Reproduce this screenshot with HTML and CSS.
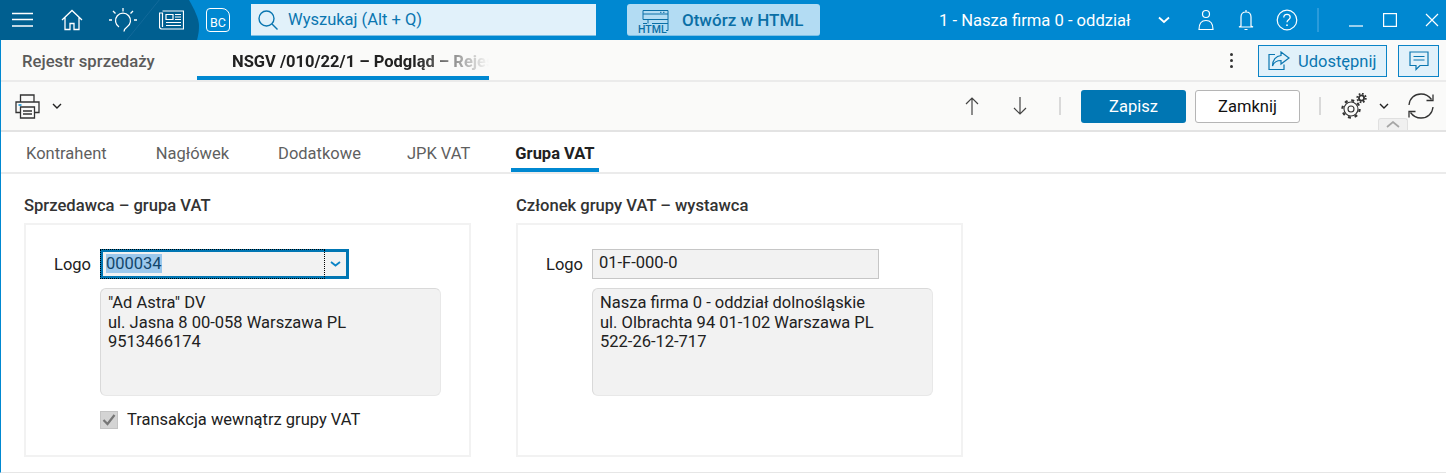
FILE: index.html
```html
<!DOCTYPE html>
<html lang="en">
<head>
    <meta charset="UTF-8">
    <meta name="viewport" content="width=device-width, initial-scale=1.0">
    <title>Grupa VAT</title>
    <link rel="stylesheet" href="styles.css">
</head>
<body>
    <div class="window">
        <header class="topbar">
            <nav class="nav-dark">
                <svg class="ico-menu" width="22" height="16" viewBox="0 0 22 16"><path d="M0 1.500h21M0 7.500h21M0 14h21" stroke="#fff" stroke-width="1.400" fill="none"/></svg>
                <svg class="ico-home" width="22" height="22" viewBox="0 0 22 22"><path d="M1 11 11 1.500 21 11M4 8.500V20.500h5v-6h4v6h5V8.500" stroke="#fff" stroke-width="1.300" fill="none"/></svg>
                <svg class="ico-bulb" width="28" height="26" viewBox="0 0 28 26"><path d="M10 20a7.500 7.500 0 1 1 8 0c-1.500 1-3 2-3 4.500M14 1v3.500M4 4l2.500 2.500M24 4l-2.500 2.500M0 13h3M25 13h3" stroke="#fff" stroke-width="1.300" fill="none"/></svg>
                <svg class="ico-news" width="25" height="20" viewBox="0 0 25 20"><path d="M3.500 1h21v18H3c-1.500 0-2.500-1-2.500-2.500V3h3v14M7 4.500h7v5H7zM16 4.500h6M16 7h6M16 9.500h6M7 12.500h15M7 15.500h15" stroke="#fff" stroke-width="1.200" fill="none"/></svg>
            </nav>
            <div class="bc-logo">BC</div>
            <div class="search">
                <svg width="20" height="20" viewBox="0 0 20 20"><circle cx="8.500" cy="8.500" r="7.500" stroke="#0a76b0" stroke-width="1.400" fill="none"/><path d="m14 14 5.500 5.500" stroke="#0a76b0" stroke-width="1.400"/></svg>
                <span>Wyszukaj (Alt + Q)</span>
            </div>
            <button class="html-btn" type="button">
                <svg width="32" height="30" viewBox="0 -4.500 32 30"><path d="M5 10V1h25v20h-2M5 4.500h25M5 10h25M10 10v4M14 14h16M9 14H5" stroke="#0a6fa6" stroke-width="1" fill="none"/><path d="M22 2.800h1.500M25 2.800h1.500" stroke="#0a6fa6"/><text x="0" y="23" class="html-mini">HTML</text></svg>
                <span>Otwórz w HTML</span>
            </button>
            <div class="company">1 - Nasza firma 0 - oddział</div>
            <svg class="ico-chev-top" width="12" height="8" viewBox="0 0 12 8"><path d="m1 1.500 5 4.500 5-4.500" stroke="#fff" stroke-width="1.800" fill="none"/></svg>
            <svg class="ico-user" width="16" height="22" viewBox="0 0 16 22"><circle cx="8" cy="5" r="3.500" stroke="#fff" stroke-width="1.200" fill="none"/><path d="M1 20.500c0-6 2.500-9 7-9s7 3 7 9z" stroke="#fff" stroke-width="1.200" fill="none"/></svg>
            <svg class="ico-bell" width="16" height="22" viewBox="0 0 16 22"><path d="M8 1v2M3 17V8c0-3 2-5 5-5s5 2 5 5v9l2 1H1zM6.500 20.500h3" stroke="#fff" stroke-width="1.200" fill="none"/></svg>
            <svg class="ico-help" width="22" height="22" viewBox="0 0 22 22"><circle cx="11" cy="11" r="9.800" stroke="#fff" stroke-width="1.200" fill="none"/><path d="M7.800 8.500c0-2 1.400-3.200 3.200-3.200s3.200 1.200 3.200 3c0 2.500-3.200 2.500-3.200 5" stroke="#fff" stroke-width="1.300" fill="none"/><circle cx="11" cy="16.200" r=".9" fill="#fff"/></svg>
            <div class="top-sep"></div>
            <svg class="ico-min" width="14" height="14" viewBox="0 0 14 14"><path d="M0 13h14" stroke="#fff" stroke-width="1.200"/></svg>
            <svg class="ico-max" width="14" height="14" viewBox="0 0 14 14"><rect x=".6" y=".6" width="12.800" height="12.800" stroke="#fff" stroke-width="1.200" fill="none"/></svg>
            <svg class="ico-close" width="14" height="14" viewBox="0 0 14 14"><path d="m1 1 12 12M13 1 1 13" stroke="#fff" stroke-width="1.200"/></svg>
        </header>

        <div class="pagebar">
            <div class="page-tab">Rejestr sprzedaży</div>
            <div class="page-tab page-tab-active"><span>NSGV /010/22/1 – Podgląd – Rejes</span></div>
            <div class="dots"><i></i><i></i><i></i></div>
            <button class="share-btn" type="button">
                <svg width="22" height="20" viewBox="0 0 22 20"><path d="M7 3.500H1v15h15v-5" stroke="#0a76b0" stroke-width="1.200" fill="none"/><path d="M13 1l8 6-8 6V9.500C9 9.500 6 11 4.500 15 4.500 9 8 5 13 4.500z" stroke="#0a76b0" stroke-width="1.200" fill="none"/></svg>
                <span>Udostępnij</span>
            </button>
            <button class="chat-btn" type="button">
                <svg width="20" height="20" viewBox="0 0 20 20"><path d="M1 1h18v13.500h-8l-4 4v-4H1zM4.500 5.500h11M4.500 9h11" stroke="#0a76b0" stroke-width="1.200" fill="none"/></svg>
            </button>
        </div>

        <div class="toolbar">
            <svg class="ico-print" width="25" height="25" viewBox="0 0 25 25"><path d="M5.500 8V1h13.500v7" stroke="#333" stroke-width="1.300" fill="none"/><path d="M5 18.500H1V8h23v10.500h-4" stroke="#333" stroke-width="1.300" fill="none"/><path d="M5.500 13h14v11h-14zM8 17h9M8 20h9" stroke="#333" stroke-width="1.300" fill="none"/><path d="M3.500 11h3" stroke="#0088d1" stroke-width="1.500"/></svg>
            <svg class="ico-chev" width="10" height="7" viewBox="0 0 10 7"><path d="m1 1 4 4 4-4" stroke="#222" stroke-width="1.400" fill="none"/></svg>
            <svg class="ico-up" width="14" height="18" viewBox="0 0 14 18"><path d="M7 18V1M1 7l6-6 6 6" stroke="#444" stroke-width="1.200" fill="none"/></svg>
            <svg class="ico-down" width="14" height="18" viewBox="0 0 14 18"><path d="M7 0v17M1 11l6 6 6-6" stroke="#444" stroke-width="1.200" fill="none"/></svg>
            <div class="tool-sep sep-a"></div>
            <button class="btn-primary" type="button">Zapisz</button>
            <button class="btn-plain" type="button">Zamknij</button>
            <div class="tool-sep sep-b"></div>
            <svg class="ico-gears" width="26" height="26" viewBox="0 0 26 26">
                <circle cx="10" cy="16" r="7" stroke="#333" stroke-width="1.100" fill="none"/>
                <circle cx="10" cy="16" r="8.600" stroke="#333" stroke-width="2.200" stroke-dasharray="3 3.750" fill="none"/>
                <circle cx="10" cy="16" r="3" stroke="#333" stroke-width="1.100" fill="none"/>
                <circle cx="20.500" cy="5" r="2.600" stroke="#333" stroke-width="1.800" fill="none"/>
                <circle cx="20.500" cy="5" r="4.300" stroke="#333" stroke-width="1.800" stroke-dasharray="1.700 1.670" fill="none"/>
            </svg>
            <svg class="ico-chev ico-chev-b" width="10" height="7" viewBox="0 0 10 7"><path d="m1 1 4 4 4-4" stroke="#222" stroke-width="1.400" fill="none"/></svg>
            <svg class="ico-refresh" width="26" height="26" viewBox="0 0 26 26"><path d="M1 12C1.500 5.500 6.500 1 13 1c4.500 0 8 2 10.500 5.500M25 14c-.5 6.500-5.500 11-12 11-4.500 0-8-2-10.500-5.500" stroke="#333" stroke-width="1.300" fill="none"/><path d="M25 1.500V7.500h-6.500M1 24.500V18.500h6.500" stroke="#333" stroke-width="1.300" fill="none"/></svg>
            <div class="collapse-tab"><svg width="14" height="7" viewBox="0 0 14 7"><path d="m1 6 6-5 6 5" stroke="#a6a6a6" stroke-width="1.700" fill="none"/></svg></div>
        </div>

        <div class="tabs">
            <div class="tab">Kontrahent</div>
            <div class="tab">Nagłówek</div>
            <div class="tab tab-extra">Dodatkowe</div>
            <div class="tab tab-tight">JPK VAT</div>
            <div class="tab tab-active">Grupa VAT</div>
        </div>

        <main class="content">
            <section class="group">
                <h2>Sprzedawca – grupa VAT</h2>
                <div class="panel">
                    <div class="field-row">
                        <label>Logo</label>
                        <div class="combo">
                            <div class="combo-value"><span>000034</span></div>
                            <div class="combo-arrow"><svg width="11" height="6" viewBox="0 0 11 6"><path d="m1 1 4.500 3.500L10 1" stroke="#0a83c6" stroke-width="1.800" fill="none"/></svg></div>
                        </div>
                    </div>
                    <div class="address">"Ad Astra" DV<br>ul. Jasna 8 00-058 Warszawa PL<br>9513466174</div>
                    <div class="check-row">
                        <div class="checkbox"><svg width="14" height="12" viewBox="0 0 14 12"><path d="m1.500 6 4 4 7-9" stroke="#777" stroke-width="2.200" fill="none"/></svg></div>
                        <span>Transakcja wewnątrz grupy VAT</span>
                    </div>
                </div>
            </section>
            <section class="group">
                <h2>Członek grupy VAT – wystawca</h2>
                <div class="panel">
                    <div class="field-row">
                        <label>Logo</label>
                        <div class="readonly">01-F-000-0</div>
                    </div>
                    <div class="address">Nasza firma 0 - oddział dolnośląskie<br>ul. Olbrachta 94 01-102 Warszawa PL<br>522-26-12-717</div>
                </div>
            </section>
        </main>
    </div>
</body>
</html>
```

FILE: styles.css
```css
* {
    box-sizing: border-box;
}

html, body {
    margin: 0;
    height: 100%;
    overflow: hidden;
}

body {
    font-family: Roboto, Arial, sans-serif;
    font-size: 16.5px;
    color: #212121;
    background-color: #fff;
}

button {
    font-family: inherit;
    font-size: 16.5px;
    padding: 0;
    cursor: pointer;
}

.window {
    height: 473px;
    border-left: 1px solid #0088d1;
    border-bottom: 1px solid #e6e6e6;
    display: flex;
    flex-direction: column;
}

/* top blue bar */
.topbar {
    height: 40px;
    margin-left: -1px;
    background-color: #0088d1;
    display: flex;
    align-items: center;
    flex: none;
}

.nav-dark {
    width: 199px;
    height: 40px;
    flex: none;
    display: flex;
    align-items: center;
    padding-left: 12px;
    background: linear-gradient(129deg, transparent 68.4%, #12699a 68.8%, transparent 69.2%) #005f90;
    clip-path: path("M0 0H189C194 9 199 18 199 26C199 32 198 36 197 40H0Z");
}

.ico-menu { margin-right: 27px; }
.ico-home { margin-right: 26px; }
.ico-bulb { margin-right: 22px; }
.ico-news { flex: none; }

.bc-logo {
    width: 24px;
    height: 24px;
    margin-left: 7px;
    border: 1.3px solid #fff;
    border-radius: 4px 8px 4px 4px;
    color: #fff;
    font-size: 12.500px;
    line-height: 28px;
    text-align: center;
    flex: none;
}

.search {
    width: 345px;
    height: 32px;
    margin-left: 21px;
    padding-left: 7px;
    background-color: #e1f1fa;
    border-bottom: 1px solid #7cc0e6;
    display: flex;
    align-items: center;
    gap: 10px;
    color: #0a76b0;
    flex: none;
}

.html-btn {
    width: 193px;
    height: 32px;
    margin-left: 31px;
    border: 0;
    border-bottom: 1px solid #7cc0e6;
    border-radius: 3px;
    background-color: #b3dcf3;
    color: #0a6fa6;
    font-size: 17px;
    font-weight: 500;
    display: flex;
    align-items: center;
    gap: 12px;
    padding-left: 11px;
    flex: none;
}

.html-mini {
    font-size: 10.500px;
    font-weight: 500;
    fill: #0a6fa6;
}

.company {
    margin-left: 119px;
    width: 189px;
    color: #fff;
    font-size: 16.600px;
    white-space: nowrap;
    flex: none;
}

.ico-chev-top { margin-left: 30px; }
.ico-user { margin-left: 28px; }
.ico-bell { margin-left: 24px; }
.ico-help { margin-left: 22px; }

.top-sep {
    width: 2px;
    height: 24px;
    margin-left: 19px;
    background-color: #2a9bdb;
}

.ico-min { margin-left: 30px; }
.ico-max { margin-left: 20px; }
.ico-close { margin-left: 28px; }

/* page tabs */
.pagebar {
    height: 42px;
    background-color: #fafaf9;
    border-bottom: 2px solid #ebebeb;
    display: flex;
    flex: none;
}

.page-tab {
    height: 40px;
    padding: 12px 0 0 21px;
    width: 196px;
    color: #5a5a5a;
    font-size: 16.700px;
    font-weight: 500;
    flex: none;
    white-space: nowrap;
}

.page-tab-active {
    width: 292px;
    padding-left: 35px;
    color: #212121;
    border-bottom: 4px solid #0088d1;
}

.page-tab-active span {
    display: block;
    -webkit-mask-image: linear-gradient(to right, #000 72%, transparent 100%);
    mask-image: linear-gradient(to right, #000 72%, transparent 100%);
    font-weight: 700;
    font-size: 16.500px;
}

.dots {
    margin-left: auto;
    display: flex;
    flex-direction: column;
    gap: 3px;
    padding-top: 13px;
    margin-right: 25px;
}

.dots i {
    display: block;
    width: 3px;
    height: 3px;
    border-radius: 50%;
    background-color: #333;
}

.share-btn, .chat-btn {
    height: 32px;
    margin-top: 5px;
    border: 1px solid #0a83c6;
    background-color: #e1f1fa;
    color: #0a76b0;
    display: flex;
    align-items: center;
    flex: none;
}

.share-btn {
    width: 129px;
    padding-left: 9px;
    gap: 8px;
}

.chat-btn {
    width: 41px;
    margin: 5px 7px 0 11px;
    justify-content: center;
}

/* toolbar */
.toolbar {
    height: 50px;
    background-color: #fafaf9;
    border-bottom: 2px solid #e3e3e3;
    display: flex;
    align-items: center;
    padding-left: 14px;
    position: relative;
    flex: none;
}

.ico-print { flex: none; }
.ico-chev { margin-left: 12px; flex: none; }
.ico-up { margin-left: 903px; }
.ico-down { margin-left: 34px; }

.tool-sep {
    width: 2px;
    height: 18px;
    background-color: #d9d9d9;
    flex: none;
}

.sep-a { margin-left: 32px; }
.sep-b { margin-left: 19px; }

.btn-primary {
    width: 105px;
    height: 33px;
    margin-left: 20px;
    border: 0;
    border-radius: 3px;
    background-color: #0076b3;
    color: #fff;
}

.btn-plain {
    width: 105px;
    height: 33px;
    margin-left: 9px;
    border: 1px solid #b5b5b5;
    border-radius: 3px;
    background-color: #fff;
    color: #111;
}

.ico-gears { margin-left: 20px; }
.ico-chev-b { margin-left: 12px; }
.ico-refresh { margin-left: 19px; }

.collapse-tab {
    position: absolute;
    left: 1377px;
    bottom: 0;
    width: 30px;
    height: 12px;
    background-color: #f0f0f0;
    border: 1px solid #e0e0e0;
    border-bottom: 0;
    border-radius: 3px 3px 0 0;
    text-align: center;
    line-height: 8px;
}

/* form tabs */
.tabs {
    height: 42px;
    border-bottom: 2px solid #ebebeb;
    display: flex;
    padding-left: 21px;
    flex: none;
}

.tab {
    height: 40px;
    padding: 12px 4px 0;
    margin-right: 41px;
    color: #5f5f5f;
}

.tab-extra {
    margin-right: 38px;
}

.tab-tight {
    margin-right: 37px;
}

.tab-active {
    color: #212121;
    font-weight: 700;
    border-bottom: 4px solid #0088d1;
}

/* content */
.content {
    flex: 1;
    padding: 21px 0 0 23px;
    display: flex;
    gap: 45px;
}

.group {
    width: 447px;
}

h2 {
    margin: 0 0 8px;
    padding-top: 1px;
    font-size: 16.600px;
    line-height: 19px;
    font-weight: 500;
    color: #333;
}

.panel {
    height: 234px;
    border: 2px solid #f2f2f2;
    padding: 24px 0 0 74px;
}

.field-row {
    display: flex;
    align-items: center;
    position: relative;
}

.field-row label {
    position: absolute;
    right: 100%;
    margin-right: 9px;
}

.combo {
    width: 249px;
    height: 30px;
    border: 3px solid #0076b3;
    background-color: #f2f2f2;
    display: flex;
}

.combo-value {
    width: 225px;
    margin: -3px 0 -3px -3px;
    padding: 0 0 2px 5px;
    border: 1px dotted #000;
    display: flex;
    align-items: center;
}

.combo-value span {
    background-color: #9cc8ec;
    color: #12466b;
    line-height: 19px;
}

.combo-arrow {
    flex: 1;
    display: flex;
    align-items: center;
    justify-content: center;
}

.readonly {
    width: 287px;
    height: 30px;
    padding-left: 6px;
    border: 1px solid #c6c6c6;
    background-color: #f2f2f2;
    line-height: 26px;
}

.address {
    width: 341px;
    height: 108px;
    margin-top: 9px;
    padding: 4px 7px;
    background-color: #f2f2f2;
    border: 1px solid #e8e8e8;
    border-top-color: #d9d9d9;
    border-left-color: #d9d9d9;
    border-radius: 6px;
    line-height: 19.500px;
}

.check-row {
    display: flex;
    align-items: center;
    gap: 9px;
    margin-top: 14px;
}

.checkbox {
    width: 18px;
    height: 18px;
    background-color: #d4d4d4;
    border: 1px solid #c4c4c4;
    display: flex;
    align-items: center;
    justify-content: center;
}
```
